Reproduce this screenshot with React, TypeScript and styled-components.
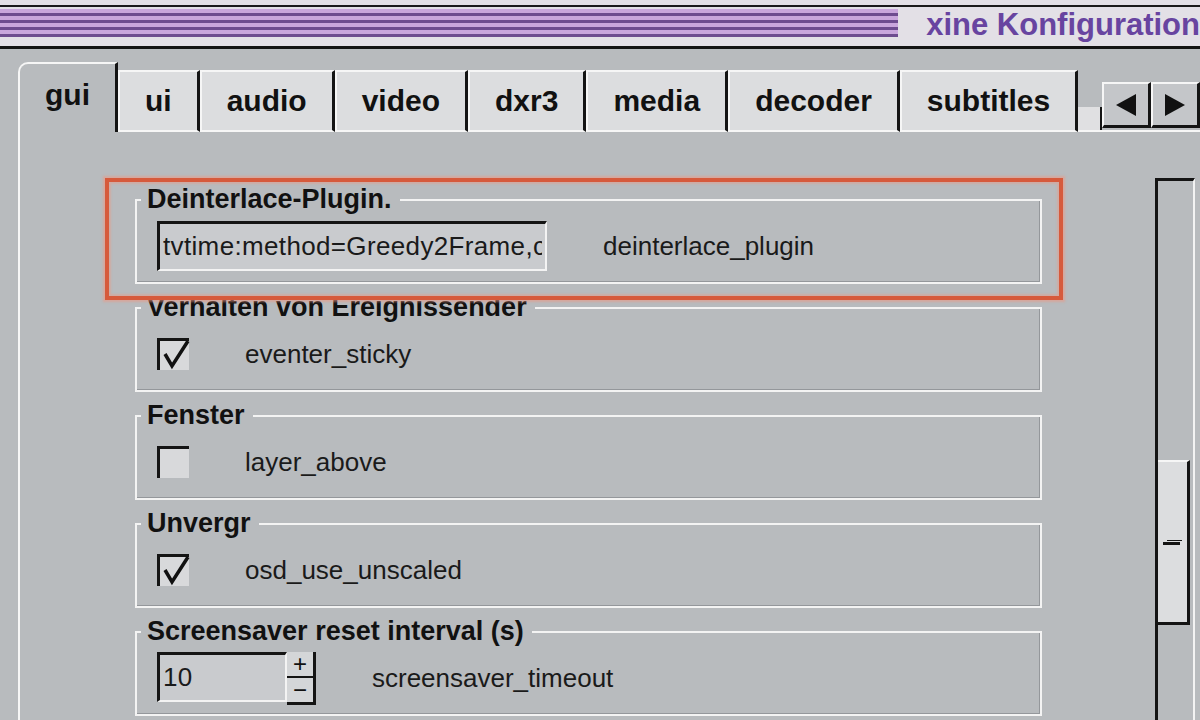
import styled, { createGlobalStyle } from "styled-components";

const GlobalStyle = createGlobalStyle`
    html, body {
        margin: 0;
        padding: 0;
        background: #b8bbbe;
        overflow: hidden;
    }
    body {
        font-family: "Liberation Sans", Arial, sans-serif;
        color: #111;
    }
`;

const Window = styled.div`
    width: 1200px;
    height: 720px;
    display: flex;
    flex-direction: column;
    overflow: hidden;
    background: #b8bbbe;
`;

const TitleBar = styled.div`
    background: #e3e0e6;
    padding-top: 5px;
    border-bottom: 3px solid #141414;
`;

const TitleInner = styled.div`
    display: flex;
    align-items: center;
    height: 30px;
    padding: 1px 0 8px;
    border-top: 2px solid #1a1a1a;
    overflow: hidden;
`;

const Stripes = styled.div`
    flex: 1;
    min-width: 0;
    height: 28px;
    background: repeating-linear-gradient(
        to bottom,
        #c9a6dc 0,
        #c9a6dc 4px,
        #6e4c8f 4px,
        #6e4c8f 7px
    );
`;

const Title = styled.div`
    flex-shrink: 0;
    padding: 4px 0 0 28px;
    font-size: 31px;
    font-weight: 700;
    line-height: 30px;
    color: #6844a0;
    white-space: nowrap;
`;

const TabRow = styled.div`
    display: flex;
    align-items: flex-end;
    height: 70px;
    margin: 13px 0 -2px 18px;
    position: relative;
    z-index: 1;
`;

const Tab = styled.div<{ $active?: boolean }>`
    display: flex;
    align-items: center;
    box-sizing: border-box;
    height: ${p => (p.$active ? "70px" : "62px")};
    padding: 0 25px;
    font-size: 30px;
    font-weight: 700;
    color: #111;
    background: ${p => (p.$active ? "#b8bbbe" : "#dcdddf")};
    border-top: 2px solid #f6f6f6;
    border-left: 2px solid #f6f6f6;
    border-right: 3px solid #141414;
    border-bottom: ${p => (p.$active ? "none" : "2px solid #f6f6f6")};
    border-top-left-radius: ${p => (p.$active ? "10px" : "0")};
    padding-bottom: ${p => (p.$active ? "6px" : "0")};
`;

const TabSpacer = styled.div`
    width: 25px;
    height: 23px;
    margin-bottom: 2px;
    background: #e0e0e2;
    border-right: 2px solid #141414;
`;

const ArrowGroup = styled.div`
    display: flex;
    margin-bottom: 4px;
`;

const ArrowButton = styled.div`
    display: flex;
    align-items: center;
    justify-content: center;
    box-sizing: border-box;
    width: 49px;
    height: 46px;
    background: #c4c6c9;
    border-top: 2px solid #f6f6f6;
    border-left: 2px solid #f6f6f6;
    border-right: 3px solid #141414;
    border-bottom: 3px solid #141414;
`;

const Panel = styled.div`
    flex: 1;
    min-height: 0;
    display: flex;
    align-items: stretch;
    margin-left: 18px;
    padding-top: 46px;
    border-top: 2px solid #f6f6f6;
    border-left: 2px solid #f6f6f6;
`;

const GroupList = styled.div`
    position: relative;
    display: flex;
    flex-direction: column;
    gap: 10px;
    width: 907px;
    margin: 8px 0 0 115px;
    align-self: flex-start;
`;

const Group = styled.fieldset`
    margin: 0;
    padding: 7px 0 10px 0;
    border: 2px solid #f3f3f3;
    box-shadow: inset -1px -1px 0 #94979b;
    min-width: 0;
`;

const Legend = styled.legend`
    margin-left: 4px;
    padding: 0 8px 0 6px;
    font-size: 27px;
    font-weight: 700;
    line-height: 27px;
    color: #111;
`;

const Row = styled.div`
    display: flex;
    align-items: center;
    gap: 56px;
    height: 52px;
    padding-left: 20px;
`;

const Key = styled.span`
    font-size: 26px;
    color: #1a1a1a;
    white-space: nowrap;
`;

const TextInput = styled.input<{ $width: number }>`
    box-sizing: border-box;
    width: ${p => p.$width}px;
    height: 50px;
    margin: 0;
    padding: 0 3px;
    font-family: "Liberation Sans", Arial, sans-serif;
    font-size: 26px;
    letter-spacing: 0.35px;
    color: #1a1a1a;
    background: #c9cbce;
    border-top: 3px solid #141414;
    border-left: 3px solid #141414;
    border-right: 2px solid #f3f3f3;
    border-bottom: 2px solid #f3f3f3;
    outline: none;
`;

const Spin = styled.div`
    display: flex;
    align-items: stretch;
`;

const SpinButtons = styled.div`
    display: flex;
    flex-direction: column;
    width: 26px;
    border-right: 3px solid #141414;
    border-bottom: 3px solid #141414;
    background: #d4d6d8;
`;

const SpinButton = styled.div<{ $top?: boolean }>`
    flex: 1;
    display: flex;
    align-items: center;
    justify-content: center;
    font-size: 24px;
    line-height: 1;
    color: #111;
    border-bottom: ${p => (p.$top ? "2px solid #141414" : "none")};
`;

const CheckBox = styled.div`
    position: relative;
    box-sizing: border-box;
    width: 32px;
    height: 32px;
    background: #d8d9db;
    border-top: 3px solid #141414;
    border-left: 3px solid #141414;

    svg {
        position: absolute;
        left: -1px;
        top: -3px;
        overflow: visible;
    }
`;

const Highlight = styled.div`
    position: absolute;
    left: -30px;
    top: -8px;
    width: 958px;
    height: 122px;
    box-sizing: border-box;
    border: 4px solid #d65a3c;
    box-shadow: 0 0 2px 2px rgba(238, 150, 130, 0.55),
        inset 0 0 2px 2px rgba(238, 150, 130, 0.45);
    pointer-events: none;
`;

const ScrollTrack = styled.div`
    box-sizing: border-box;
    width: 40px;
    margin-left: 113px;
    border-top: 3px solid #141414;
    border-left: 3px solid #141414;
    border-right: 2px solid #f3f3f3;
`;

const ScrollThumb = styled.div`
    position: relative;
    box-sizing: border-box;
    width: 32px;
    height: 165px;
    margin-top: 279px;
    background: #dcdddf;
    border-top: 2px solid #f6f6f6;
    border-right: 3px solid #141414;
    border-bottom: 3px solid #141414;

    &::after {
        content: "";
        position: absolute;
        left: 5px;
        top: 50%;
        width: 17px;
        height: 3px;
        background: #141414;
        box-shadow: 3px -3px 0 -1px #141414;
    }
`;

const Check = () => (
    <svg width="34" height="34" viewBox="0 0 34 34">
        <polyline
            points="6,16 13,28 29,3"
            fill="none"
            stroke="#111"
            strokeWidth="3.5"
            strokeLinejoin="miter"
        />
    </svg>
);

const Arrow = ({ dir }: { dir: "left" | "right" }) => (
    <svg width="24" height="26" viewBox="0 0 24 26">
        {dir === "left" ? (
            <polygon points="22,2 22,24 2,13" fill="#111" />
        ) : (
            <polygon points="2,2 2,24 22,13" fill="#111" />
        )}
    </svg>
);

const tabs = ["gui", "ui", "audio", "video", "dxr3", "media", "decoder", "subtitles"];

export default function App() {
    return (
        <>
            <GlobalStyle />
            <Window>
                <TitleBar>
                    <TitleInner>
                        <Stripes />
                        <Title>xine Konfiguration</Title>
                    </TitleInner>
                </TitleBar>

                <TabRow>
                    {tabs.map((t, i) => (
                        <Tab key={t} $active={i === 0}>{t}</Tab>
                    ))}
                    <TabSpacer />
                    <ArrowGroup>
                        <ArrowButton><Arrow dir="left" /></ArrowButton>
                        <ArrowButton><Arrow dir="right" /></ArrowButton>
                    </ArrowGroup>
                </TabRow>

                <Panel>
                    <GroupList>
                        <Group>
                            <Legend>Deinterlace-Plugin.</Legend>
                            <Row>
                                <TextInput $width={390} readOnly value="tvtime:method=Greedy2Frame,cheap_mode=0" />
                                <Key>deinterlace_plugin</Key>
                            </Row>
                        </Group>

                        <Group>
                            <Legend>Verhalten von Ereignissender</Legend>
                            <Row>
                                <CheckBox><Check /></CheckBox>
                                <Key>eventer_sticky</Key>
                            </Row>
                        </Group>

                        <Group>
                            <Legend>Fenster</Legend>
                            <Row>
                                <CheckBox />
                                <Key>layer_above</Key>
                            </Row>
                        </Group>

                        <Group>
                            <Legend>Unvergr</Legend>
                            <Row>
                                <CheckBox><Check /></CheckBox>
                                <Key>osd_use_unscaled</Key>
                            </Row>
                        </Group>

                        <Group>
                            <Legend>Screensaver reset interval (s)</Legend>
                            <Row>
                                <Spin>
                                    <TextInput $width={130} readOnly value="10" />
                                    <SpinButtons>
                                        <SpinButton $top>+</SpinButton>
                                        <SpinButton>−</SpinButton>
                                    </SpinButtons>
                                </Spin>
                                <Key>screensaver_timeout</Key>
                            </Row>
                        </Group>

                        <Highlight />
                    </GroupList>

                    <ScrollTrack>
                        <ScrollThumb />
                    </ScrollTrack>
                </Panel>
            </Window>
        </>
    );
}
